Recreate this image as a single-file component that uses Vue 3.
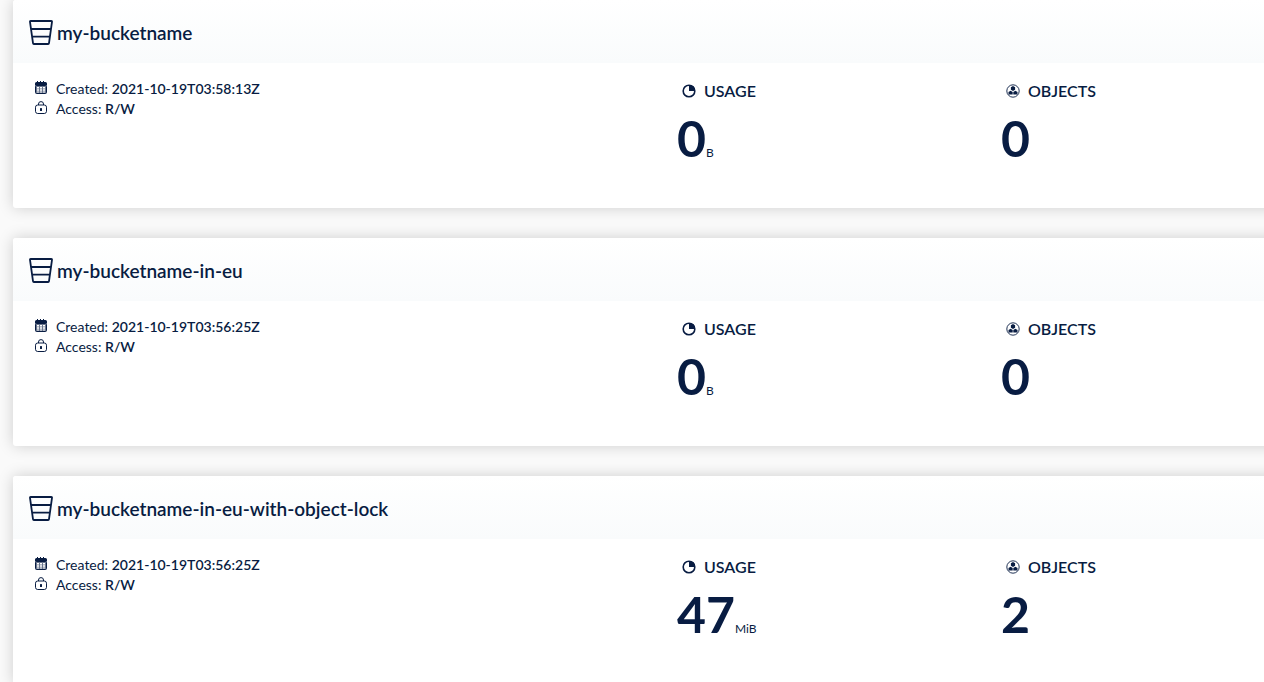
<script setup>
const buckets = [
  { name: 'my-bucketname', created: '2021-10-19T03:58:13Z', access: 'R/W', usage: '0', unit: 'B', objects: '0' },
  { name: 'my-bucketname-in-eu', created: '2021-10-19T03:56:25Z', access: 'R/W', usage: '0', unit: 'B', objects: '0' },
  { name: 'my-bucketname-in-eu-with-object-lock', created: '2021-10-19T03:56:25Z', access: 'R/W', usage: '47', unit: 'MiB', objects: '2' },
]
</script>

<template>
  <main class="viewport">
    <div class="list">
      <article v-for="bucket in buckets" :key="bucket.name" class="card">
        <header class="head">
          <svg class="bucket-icon" viewBox="0 0 24 26" aria-hidden="true">
            <path d="M1.7 1h20.6q.8 0 .7.8L20 23.200q-.1.8-.9.8H4.9q-.8 0-.9-.8L1 1.8Q.9 1 1.700 1zM2 9h20M3.300 16.700h17.400" />
          </svg>
          <h2 class="name">{{ bucket.name }}</h2>
        </header>
        <div class="body">
          <div class="facts">
            <p class="fact">
              <svg class="fact-icon" viewBox="0 0 12 14" aria-hidden="true">
                <path fill="currentColor" d="M2 0h1v1h2V0h1v1h2V0h1v1h1.500Q12 1 12 2.500V4.500H0v-2Q0 1 1.500 1H2z" />
                <rect x=".5" y="4.500" width="11" height="8" rx="1" fill="currentColor" fill-opacity=".6" stroke="currentColor" />
                <path d="M2 6h2v1.500H2zM5 6h2v1.500H5zM8 6h2v1.500H8zM2 8.300h2v1.400H2zM5 8.300h2v1.400H5zM8 8.300h2v1.400H8zM2 10.500h2v1H2zM5 10.500h2v1H5zM8 10.500h2v1H8z" fill="#fff" />
              </svg>
              <span>Created: <b>{{ bucket.created }}</b></span>
            </p>
            <p class="fact">
              <svg class="fact-icon" viewBox="0 0 12 14" aria-hidden="true">
                <g fill="none" stroke="currentColor">
                  <rect x=".5" y="4" width="11" height="8.500" rx="2.200" />
                  <path d="M3.500 4V3Q3.500.6 6 .6T8.500 3v1" />
                </g>
                <rect x="5" y="7" width="2" height="3" rx=".5" fill="currentColor" />
              </svg>
              <span>Access: <b>{{ bucket.access }}</b></span>
            </p>
          </div>
          <section class="metric">
            <h3 class="label">
              <svg class="metric-icon" viewBox="0 0 14 14" aria-hidden="true">
                <circle cx="7" cy="7" r="5.800" fill="none" stroke="currentColor" stroke-width="1.600" />
                <path d="M7 1v6h6Q13 1 7 1z" fill="currentColor" />
              </svg>
              USAGE
            </h3>
            <p class="value">{{ bucket.usage }}<span class="unit">{{ bucket.unit }}</span></p>
          </section>
          <section class="metric">
            <h3 class="label">
              <svg class="metric-icon" viewBox="0 0 14 14" aria-hidden="true">
                <circle cx="7" cy="7" r="6.200" fill="none" stroke="currentColor" stroke-width=".9" />
                <g fill="currentColor">
                  <path d="M7 2l2.100 1.200v2.600L7 6.900 4.900 5.800V3.200z" />
                  <path d="M4.600 6.700l2.100 1.200v2.500H2.500V7.900z" />
                  <path d="M9.400 6.700l2.100 1.200v2.500H7.300V7.900z" />
                </g>
              </svg>
              OBJECTS
            </h3>
            <p class="value">{{ bucket.objects }}</p>
          </section>
        </div>
      </article>
    </div>
  </main>
</template>

<style>
body {
  background: #fafafa;
}
</style>

<style scoped>
.viewport {
  height: 100vh;
  overflow: hidden;
  color: #081c42;
  font-family: Lato, "Liberation Sans", sans-serif;
}
.list {
  display: flex;
  flex-direction: column;
  gap: 30px;
  margin: 0 -77px 0 13px;
}
.card {
  background: #fff;
  border-radius: 3px;
  box-shadow: 0 0 15px rgba(0, 0, 0, 0.18);
}
.head {
  display: flex;
  align-items: center;
  gap: 4px;
  padding: 20px 16px 17px;
  border-radius: 3px 3px 0 0;
  background: linear-gradient(#fff, #f9fbfc);
}
.bucket-icon {
  width: 24px;
  height: 26px;
  fill: none;
  stroke: currentColor;
  stroke-width: 1.800;
}
.name {
  margin: 0;
  font-size: 19px;
  line-height: 26px;
  font-weight: 600;
}
.body {
  display: grid;
  grid-template-columns: 2fr 1fr 1fr;
  padding: 16px 16px 25px;
}
.facts {
  padding-left: 6px;
}
.fact {
  display: flex;
  align-items: flex-start;
  gap: 9px;
  margin: 0;
  font-size: 14px;
  line-height: 20px;
}
.fact b {
  font-weight: 600;
}
.fact-icon {
  width: 12px;
  height: 14px;
  margin-top: 2px;
}
.label {
  display: flex;
  align-items: center;
  gap: 8px;
  margin: 0;
  padding: 0 5px;
  font-size: 16px;
  line-height: 24px;
  font-weight: 600;
}
.metric-icon {
  width: 14px;
  height: 14px;
}
.value {
  margin: 5px 0 0;
  font-size: 50px;
  line-height: 60px;
  font-weight: 700;
}
.unit {
  font-size: 12px;
  font-weight: 400;
}
</style>
